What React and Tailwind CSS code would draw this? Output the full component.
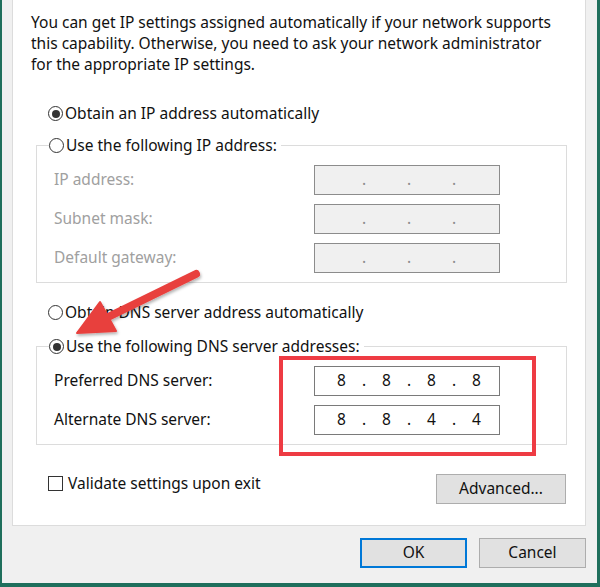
import React from "react";

function Radio({ checked }) {
  return (
    <span className="flex items-center justify-center w-[15px] h-[15px] rounded-full border border-[#333] bg-white shrink-0">
      {checked && <span className="w-[8px] h-[8px] rounded-full bg-[#333]" />}
    </span>
  );
}

function IpBox({ parts, disabled }) {
  return (
    <div
      className={`flex items-center w-[186px] h-[30px] pl-[9px] border ${
        disabled ? "bg-[#f0f0f0] border-[#8c8c8c] text-[#8c8c8c]" : "bg-white border-[#7a7a7a] text-[#111]"
      }`}
    >
      {parts.map((p, i) => (
        <React.Fragment key={i}>
          <span className="w-[35px] text-center">{p}</span>
          {i < 3 && <span className="w-[10px] text-center">.</span>}
        </React.Fragment>
      ))}
    </div>
  );
}

function Field({ label, parts, disabled }) {
  return (
    <div className="flex items-center">
      <span className={`w-[260px] ${disabled ? "text-[#a0a0a0]" : ""}`}>{label}</span>
      <IpBox parts={parts} disabled={disabled} />
    </div>
  );
}

function Group({ title, checked, children }) {
  return (
    <fieldset className="border border-[#dcdcdc] pl-[12px] pb-[9px]">
      <legend className="pr-[4px]">
        <span className="flex items-center h-[21px] gap-[2px] bg-white">
          <Radio checked={checked} />
          {title}
        </span>
      </legend>
      <div className="flex flex-col gap-[9px] pl-[5px] pt-[9px]">{children}</div>
    </fieldset>
  );
}

const empty = ["", "", "", ""];

export default function App() {
  return (
    <div className="relative w-[600px] h-[587px] overflow-hidden bg-[#f0f0f0] border-l-2 border-r-[3px] border-b-4 border-[#1f6f5c] font-['Noto_Sans',sans-serif] text-[15.5px] text-[#111]">
      <div className="ml-[10px] mr-[11px] bg-white border-x border-b border-[#dcdcdc] pl-[18px] pr-[18px] pt-[12px] pb-[21px]">
        <p className="leading-[21px] whitespace-nowrap">
          You can get IP settings assigned automatically if your network supports
          <br />
          this capability. Otherwise, you need to ask your network administrator
          <br />
          for the appropriate IP settings.
        </p>

        <div className="ml-[5px]">
          <div className="mt-[28px] flex items-center h-[21px] gap-[2px] pl-[12px]">
            <Radio checked />
            Obtain an IP address automatically
          </div>

          <div className="mt-[11px]">
            <Group title="Use the following IP address:">
              <Field label="IP address:" parts={empty} disabled />
              <Field label="Subnet mask:" parts={empty} disabled />
              <Field label="Default gateway:" parts={empty} disabled />
            </Group>
          </div>

          <div className="mt-[19px] flex items-center h-[21px] gap-[2px] pl-[12px]">
            <Radio />
            Obtain DNS server address automatically
          </div>

          <div className="mt-[13px]">
            <Group title="Use the following DNS server addresses:" checked>
              <Field label="Preferred DNS server:" parts={["8", "8", "8", "8"]} />
              <Field label="Alternate DNS server:" parts={["8", "8", "4", "4"]} />
            </Group>
          </div>

          <div className="mt-[28px] flex items-start justify-between">
            <label className="flex items-center h-[21px] gap-[5px] pl-[12px]">
              <span className="w-[15px] h-[15px] border border-[#333] bg-white" />
              Validate settings upon exit
            </label>
            <button className="mt-[1px] mr-[1px] w-[130px] h-[30px] bg-[#e1e1e1] border border-[#adadad]">
              Advanced...
            </button>
          </div>
        </div>
      </div>

      <div className="mt-[12px] mr-[11px] flex justify-end gap-[12px]">
        <button className="w-[107px] h-[30px] bg-[#e1e1e1] border-2 border-[#0078d7]">OK</button>
        <button className="w-[107px] h-[30px] bg-[#e1e1e1] border border-[#adadad]">Cancel</button>
      </div>

      {/* annotations */}
      <div className="absolute left-[277px] top-[356px] w-[257px] h-[100px] border-4 border-[#ee3b43]" />
      <svg className="absolute left-0 top-0 pointer-events-none" width="600" height="587">
        <defs>
          <filter id="sh" x="-20%" y="-20%" width="140%" height="140%">
            <feDropShadow dx="1" dy="2" stdDeviation="1.5" floodColor="#000" floodOpacity="0.3" />
          </filter>
        </defs>
        <g filter="url(#sh)" fill="#e8403e" stroke="#e8403e">
          <line x1="194" y1="274" x2="104" y2="318" strokeWidth="8" strokeLinecap="round" />
          <polygon points="75,333 98,302 114,331" strokeWidth="2" strokeLinejoin="round" />
        </g>
      </svg>
    </div>
  );
}
